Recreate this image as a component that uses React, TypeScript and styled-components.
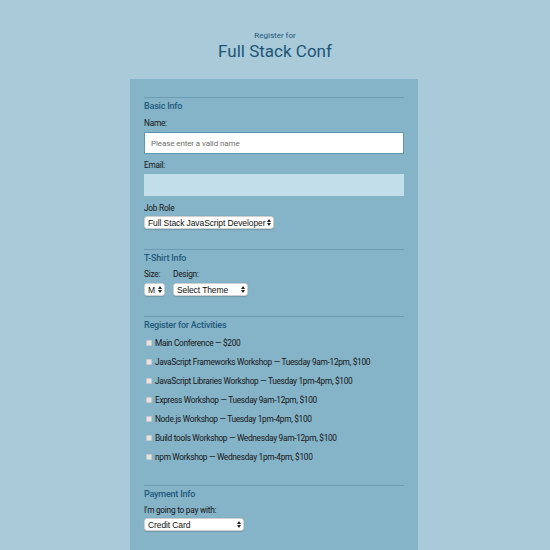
import React from "react";
import styled, { createGlobalStyle } from "styled-components";

const Global = createGlobalStyle`
  html, body { margin: 0; padding: 0; background: #a9cad9; }
  body { font-family: Roboto, "Noto Sans", sans-serif; color: #1a1a1a; }
  * { box-sizing: border-box; }
`;

const Page = styled.div`
  width: 550px;
  height: 550px;
  overflow: hidden;
  display: flex;
  flex-direction: column;
`;

const Header = styled.header`
  padding-top: 31px;
  height: 79px;
  display: flex;
  flex-direction: column;
  align-items: center;
  color: #1d5576;
`;

const Kicker = styled.div`
  font-size: 8px;
  line-height: 10px;
`;

const Title = styled.h1`
  margin: 0;
  font-size: 17px;
  font-weight: 400;
  line-height: 20px;
`;

const Panel = styled.form`
  width: 288px;
  margin-left: 130px;
  flex: 1;
  background: #85b3c8;
  padding: 18px 14px 0;
  display: flex;
  flex-direction: column;
`;

const Section = styled.fieldset<{ $gap: number }>`
  border: 0;
  margin: 0 0 ${(p) => p.$gap}px;
  padding: 0;
  border-top: 1px solid #6b9db5;
  display: flex;
  flex-direction: column;
  align-items: flex-start;
`;

const Heading = styled.h2`
  margin: 2px 0 0;
  font-size: 9px;
  letter-spacing: -0.2px;
  line-height: 12px;
  font-weight: 500;
  color: #1f5a7b;
`;

const Label = styled.label<{ $mt: number }>`
  display: block;
  margin-top: ${(p) => p.$mt}px;
  font-size: 8.3px;
  letter-spacing: -0.25px;
  line-height: 12px;
  color: #151515;
  white-space: nowrap;
`;

const TextInput = styled.div<{ $filled?: boolean; $mt: number }>`
  margin-top: ${(p) => p.$mt}px;
  width: 260px;
  height: 22px;
  background: ${(p) => (p.$filled ? "#ffffff" : "#c1deea")};
  border: 1px solid ${(p) => (p.$filled ? "#5f95ad" : "#c1deea")};
  font-size: 8px;
  letter-spacing: -0.1px;
  color: #6f6f6f;
  display: flex;
  align-items: center;
  padding-left: 6px;
`;

const SelectBox = styled.div<{ $w: number; $mt: number }>`
  margin-top: ${(p) => p.$mt}px;
  width: ${(p) => p.$w}px;
  height: 13px;
  background: #fff;
  border: 1px solid #d0d0d0;
  border-radius: 3px;
  box-shadow: 0 0.5px 1px rgba(0, 0, 0, 0.15);
  display: flex;
  align-items: center;
  justify-content: space-between;
  padding: 0 2px 0 3px;
  font-family: "Liberation Sans", Arial, sans-serif;
  font-size: 8.5px;
  letter-spacing: -0.1px;
  color: #111;
  white-space: nowrap;
  overflow: hidden;
`;

const Row = styled.div<{ $mt: number }>`
  display: flex;
  margin-top: ${(p) => p.$mt}px;
`;

const Col = styled.div<{ $w?: number }>`
  display: flex;
  flex-direction: column;
  width: ${(p) => (p.$w ? `${p.$w}px` : "auto")};
`;

const Activity = styled.label<{ $mt: number }>`
  display: flex;
  align-items: center;
  margin-top: ${(p) => p.$mt}px;
  font-size: 8.3px;
  letter-spacing: -0.3px;
  line-height: 12px;
  color: #151515;
  white-space: nowrap;
`;

const Check = styled.span`
  width: 6px;
  height: 6px;
  margin: 0 3px 0 2px;
  background: #e4e4e4;
  border: 1px solid #cacaca;
  border-radius: 1px;
`;

const Arrows = () => (
  <svg width="4" height="7" viewBox="0 0 4 7">
    <path d="M0 3 L2 0 L4 3 Z M0 4 L2 7 L4 4 Z" fill="#222" />
  </svg>
);

const Select = ({ w, mt, children }: { w: number; mt: number; children: React.ReactNode }) => (
  <SelectBox $w={w} $mt={mt}>
    <span>{children}</span>
    <Arrows />
  </SelectBox>
);

const activities = [
  "Main Conference — $200",
  "JavaScript Frameworks Workshop — Tuesday 9am-12pm, $100",
  "JavaScript Libraries Workshop — Tuesday 1pm-4pm, $100",
  "Express Workshop — Tuesday 9am-12pm, $100",
  "Node.js Workshop — Tuesday 1pm-4pm, $100",
  "Build tools Workshop — Wednesday 9am-12pm, $100",
  "npm Workshop — Wednesday 1pm-4pm, $100",
];

export default function App() {
  return (
    <Page>
      <Global />
      <Header>
        <Kicker>Register for</Kicker>
        <Title>Full Stack Conf</Title>
      </Header>
      <Panel>
        <Section $gap={20}>
          <Heading>Basic Info</Heading>
          <Label $mt={5}>Name:</Label>
          <TextInput $filled $mt={3}>Please enter a valid name</TextInput>
          <Label $mt={5}>Email:</Label>
          <TextInput $mt={3} />
          <Label $mt={6}>Job Role</Label>
          <Select w={130} mt={2}>Full Stack JavaScript Developer</Select>
        </Section>
        <Section $gap={20}>
          <Heading>T-Shirt Info</Heading>
          <Row $mt={4}>
            <Col $w={29}>
              <Label $mt={0}>Size:</Label>
              <Select w={21} mt={3}>M</Select>
            </Col>
            <Col>
              <Label $mt={0}>Design:</Label>
              <Select w={75} mt={3}>Select Theme</Select>
            </Col>
          </Row>
        </Section>
        <Section $gap={22}>
          <Heading>Register for Activities</Heading>
          {activities.map((a, i) => (
            <Activity key={a} $mt={i === 0 ? 6 : 7}>
              <Check />
              {a}
            </Activity>
          ))}
        </Section>
        <Section $gap={0}>
          <Heading>Payment Info</Heading>
          <Label $mt={4}>I'm going to pay with:</Label>
          <Select w={100} mt={2}>Credit Card</Select>
        </Section>
      </Panel>
    </Page>
  );
}
